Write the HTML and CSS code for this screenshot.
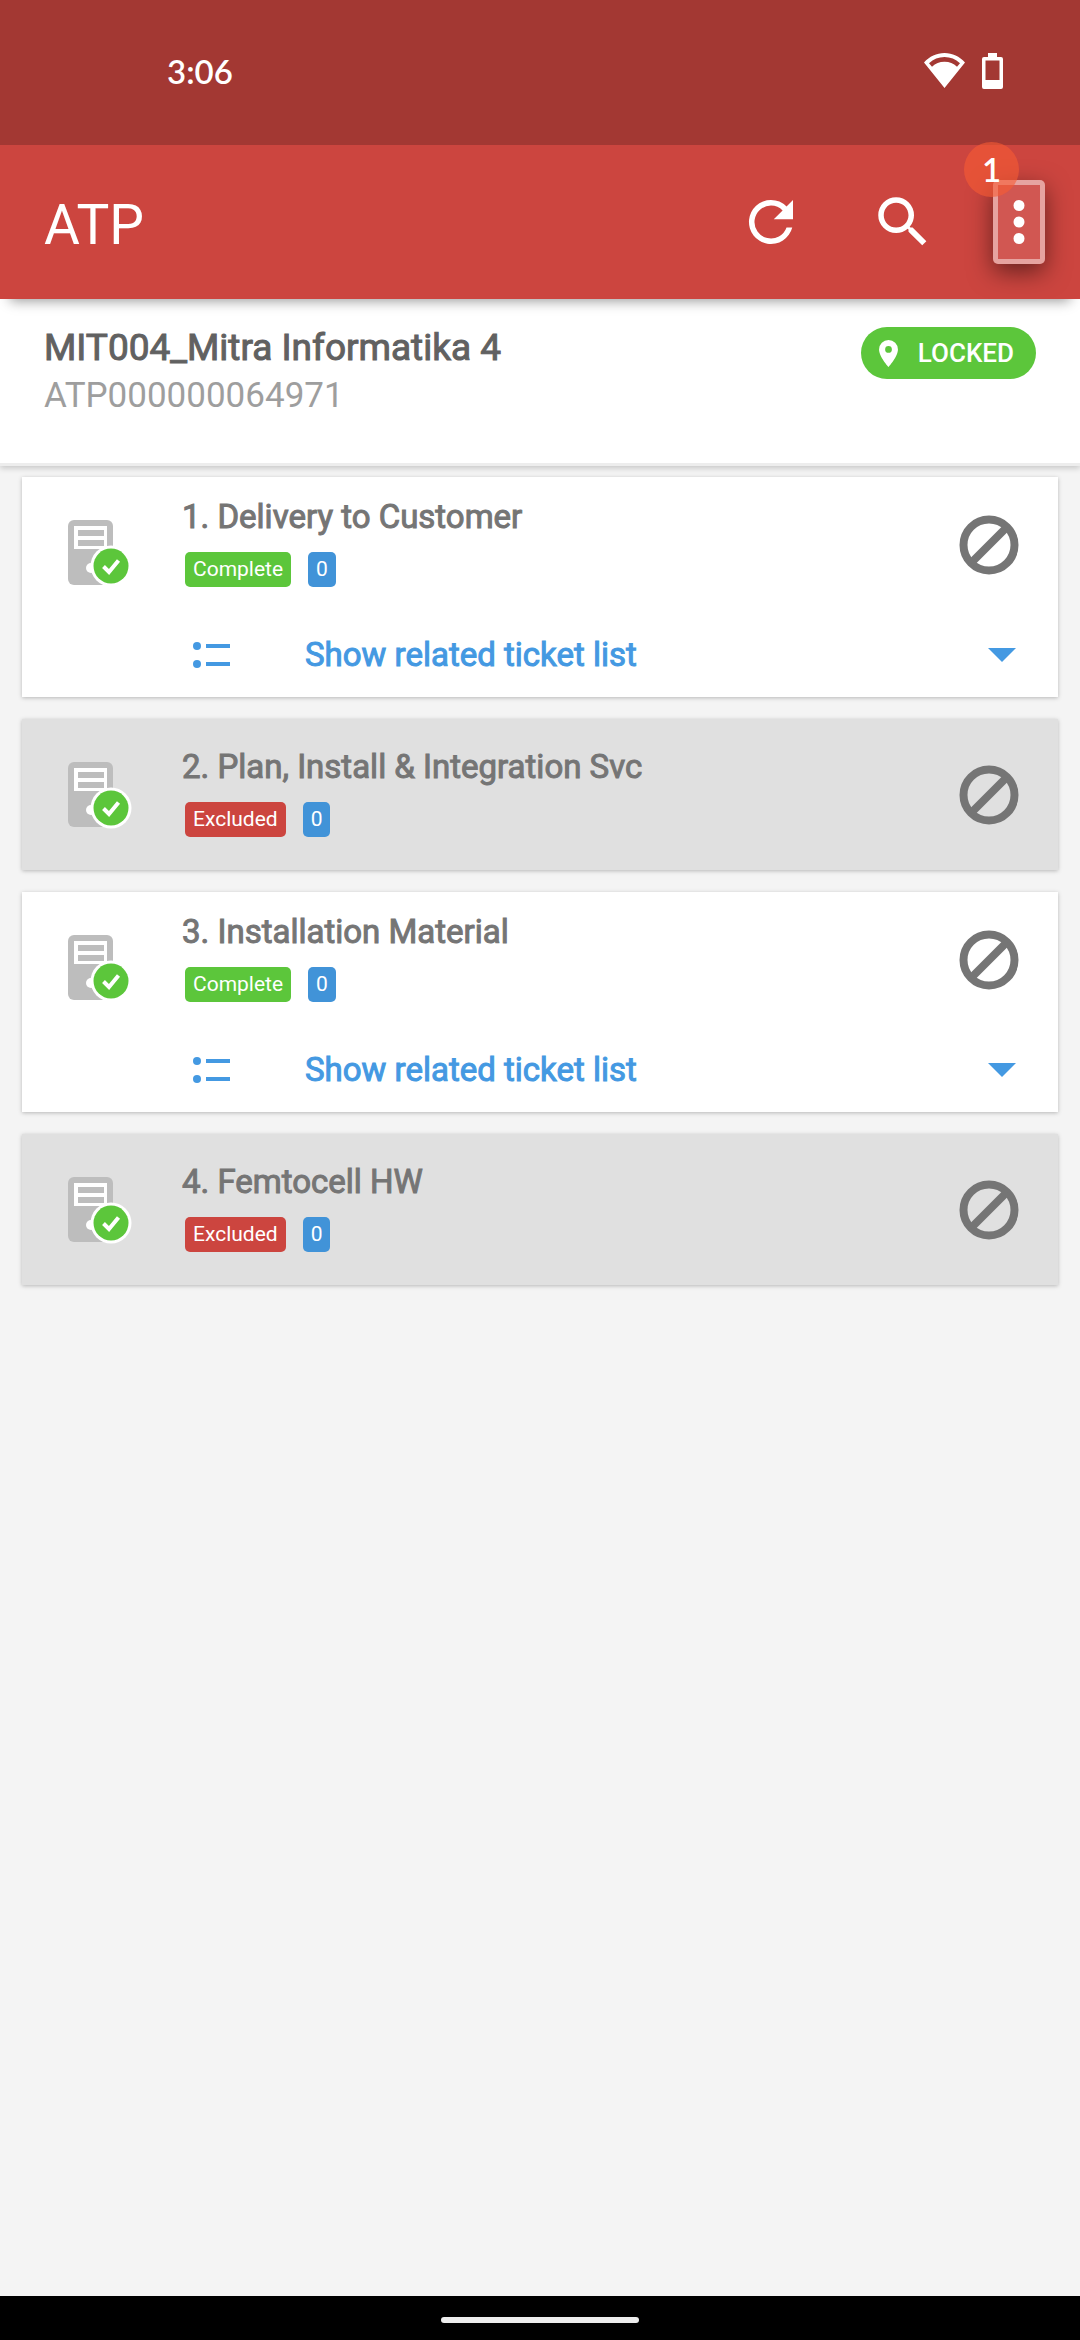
FILE: index.html
```html
<!DOCTYPE html>
<html lang="en">
<head>
    <meta charset="UTF-8">
    <meta name="viewport" content="width=device-width, initial-scale=1.0">
    <title>ATP</title>
    <link rel="stylesheet" href="styles.css">
</head>
<body>
    <!-- shared icons -->
    <svg class="sprite" aria-hidden="true">
        <symbol id="server" viewBox="0 0 66 70">
            <rect x="0" y="0" width="45" height="65" rx="6" fill="#bdbdbd"/>
            <path class="slot" d="M6 6h33v23H6z"/>
            <path d="M10 10h26v6H10zM10 20h26v6H10z" fill="#bdbdbd"/>
            <circle class="slot" cx="23" cy="48" r="5"/>
            <circle cx="43" cy="46" r="20.5" fill="#fff"/>
            <circle cx="43" cy="46" r="17.5" fill="#5cc63b"/>
            <path d="M35.5 46.500l5.500 5.500 9.500-11.500" fill="none" stroke="#fff" stroke-width="4"/>
        </symbol>
        <symbol id="block" viewBox="0 0 60 60">
            <g fill="none" stroke="#757575" stroke-width="8">
                <circle cx="30" cy="30" r="25.5"/>
                <path d="M12 48L48 12"/>
            </g>
        </symbol>
        <symbol id="list" viewBox="0 0 38 28">
            <circle cx="4" cy="5" r="4"/>
            <circle cx="4" cy="23" r="4"/>
            <path d="M13 3h24v4H13zM13 21h24v4H13z"/>
        </symbol>
        <symbol id="caret" viewBox="0 0 28 14">
            <path d="M0 0h28L14 14z"/>
        </symbol>
    </svg>

    <div class="statusbar">
        <span class="clock">3:06</span>
        <div class="status-icons">
            <svg width="41" height="35" viewBox="0 0 41 35">
                <path fill="#fff" fill-rule="evenodd" d="M20.500 0C12.500 0 5.500 3.500 0 9.500L20.500 35 41 9.500C35.500 3.500 28.500 0 20.500 0zM20.500 4C26.500 4 31.500 6.200 36 10.200L33 13.700C29.500 10.300 25.500 8.700 20.500 8.700S11.500 10.300 8 13.700L5 10.200C9.500 6.200 14.500 4 20.500 4z"/>
            </svg>
            <svg width="21" height="36" viewBox="0 0 21 36">
                <path fill="#fff" fill-rule="evenodd" d="M6 0h9v4h4a2 2 0 0 1 2 2v28a2 2 0 0 1-2 2H2a2 2 0 0 1-2-2V6a2 2 0 0 1 2-2h4zM3.500 7.500v19.500h14V7.500z"/>
            </svg>
        </div>
    </div>

    <header class="appbar">
        <h1>ATP</h1>
        <div class="actions">
            <button aria-label="Refresh">
                <svg viewBox="0 0 24 24"><path d="M17.650 6.350A7.958 7.958 0 0 0 12 4a8 8 0 1 0 7.730 10h-2.080A6 6 0 1 1 12 6c1.660 0 3.140.69 4.220 1.780L13 11h7V4z"/></svg>
            </button>
            <button aria-label="Search">
                <svg viewBox="0 0 24 24"><path d="M15.500 14h-.79l-.28-.27A6.471 6.471 0 0 0 16 9.500 6.500 6.500 0 1 0 9.500 16c1.610 0 3.090-.59 4.230-1.570l.27.28v.79l5 4.990L20.490 19zm-6 0C7.010 14 5 11.990 5 9.500S7.010 5 9.500 5 14 7.010 14 9.500 11.990 14 9.500 14z"/></svg>
            </button>
            <button class="more" aria-label="More options">
                <svg viewBox="0 0 24 24"><path d="M12 8a2 2 0 1 0 0-4 2 2 0 0 0 0 4zm0 2a2 2 0 1 0 0 4 2 2 0 0 0 0-4zm0 6a2 2 0 1 0 0 4 2 2 0 0 0 0-4z"/></svg>
                <span class="badge">1</span>
            </button>
        </div>
    </header>

    <section class="summary">
        <div>
            <h2>MIT004_Mitra Informatika 4</h2>
            <p>ATP000000064971</p>
        </div>
        <span class="locked">
            <svg width="19" height="27" viewBox="0 0 14 20"><path fill="#fff" fill-rule="evenodd" d="M7 0a7 7 0 0 0-7 7c0 5.250 7 13 7 13s7-7.750 7-13a7 7 0 0 0-7-7zm0 4.500a2.500 2.500 0 1 1 0 5 2.500 2.500 0 0 1 0-5z"/></svg>
            LOCKED
        </span>
    </section>

    <main class="cards">
        <article class="card expandable">
            <div class="card-main">
                <svg class="server"><use href="#server"/></svg>
                <div class="card-body">
                    <h3>1. Delivery to Customer</h3>
                    <div class="tags"><span class="tag green">Complete</span><span class="tag blue">0</span></div>
                </div>
                <button class="block" aria-label="Block"><svg><use href="#block"/></svg></button>
            </div>
            <button class="toggle">
                <svg class="list"><use href="#list"/></svg>
                <span>Show related ticket list</span>
                <svg class="caret"><use href="#caret"/></svg>
            </button>
        </article>

        <article class="card excluded">
            <div class="card-main">
                <svg class="server"><use href="#server"/></svg>
                <div class="card-body">
                    <h3>2. Plan, Install &amp; Integration Svc</h3>
                    <div class="tags"><span class="tag red">Excluded</span><span class="tag blue">0</span></div>
                </div>
                <button class="block" aria-label="Block"><svg><use href="#block"/></svg></button>
            </div>
        </article>

        <article class="card expandable">
            <div class="card-main">
                <svg class="server"><use href="#server"/></svg>
                <div class="card-body">
                    <h3>3. Installation Material</h3>
                    <div class="tags"><span class="tag green">Complete</span><span class="tag blue">0</span></div>
                </div>
                <button class="block" aria-label="Block"><svg><use href="#block"/></svg></button>
            </div>
            <button class="toggle">
                <svg class="list"><use href="#list"/></svg>
                <span>Show related ticket list</span>
                <svg class="caret"><use href="#caret"/></svg>
            </button>
        </article>

        <article class="card excluded">
            <div class="card-main">
                <svg class="server"><use href="#server"/></svg>
                <div class="card-body">
                    <h3>4. Femtocell HW</h3>
                    <div class="tags"><span class="tag red">Excluded</span><span class="tag blue">0</span></div>
                </div>
                <button class="block" aria-label="Block"><svg><use href="#block"/></svg></button>
            </div>
        </article>
    </main>

    <div class="navbar"><span class="pill"></span></div>
</body>
</html>
```

FILE: styles.css
```css
/* --- RESET & BASE --- */
* { box-sizing: border-box; margin: 0; padding: 0; }
body {
    min-height: 100vh;
    display: flex;
    flex-direction: column;
    font-family: Roboto, sans-serif;
    background: #f4f4f4;
}
button { border: none; background: none; font: inherit; color: inherit; cursor: pointer; }
svg { display: block; flex: none; }
.sprite { position: absolute; width: 0; height: 0; }

/* --- STATUS BAR --- */
.statusbar {
    height: 145px;
    padding: 0 77px 4px 167px;
    display: flex;
    align-items: center;
    justify-content: space-between;
    background: #a33833;
    color: #fff;
}
.clock { font-family: Lato, sans-serif; font-size: 33px; font-weight: 600; }
.status-icons { display: flex; gap: 17px; }

/* --- APP BAR --- */
.appbar {
    position: relative;
    z-index: 2;
    height: 154px;
    padding: 0 28px 0 44px;
    display: flex;
    align-items: center;
    justify-content: space-between;
    background: #cc453f;
    color: #fff;
    box-shadow: 0 12px 12px -10px rgba(0,0,0,.4);
}
.appbar h1 { font-size: 55px; font-weight: 400; line-height: 64px; padding-top: 6px; }
.actions { display: flex; align-items: center; gap: 66px; }
.actions button { width: 66px; height: 66px; }
.actions svg { width: 66px; height: 66px; fill: #fff; }
.actions .more {
    position: relative;
    width: 52px;
    height: 84px;
    margin: 0 7px 0 -9px;
    display: flex;
    align-items: center;
    justify-content: center;
    border: 5px solid rgba(255,255,255,.45);
    border-radius: 5px;
    background: rgba(255,255,255,.1);
    box-shadow: 0 8px 24px rgba(0,0,0,.5);
}
.badge {
    position: absolute;
    top: -43px;
    left: -34px;
    width: 55px;
    height: 55px;
    border-radius: 50%;
    background: rgba(246,91,51,.6);
    font: 600 33px/55px Lato, sans-serif;
    text-align: center;
}

/* --- SUMMARY --- */
.summary {
    position: relative;
    z-index: 1;
    min-height: 167px;
    padding: 28px 44px 0;
    display: flex;
    align-items: flex-start;
    justify-content: space-between;
    background: #fff;
    border-bottom: 3px solid #ededed;
    box-shadow: 0 2px 6px rgba(0,0,0,.2);
}
.summary h2 { font-size: 37px; line-height: 42px; font-weight: 400; color: #616161; -webkit-text-stroke: 1px; }
.summary p { font-size: 35px; line-height: 54px; color: #9e9e9e; }
.locked {
    height: 52px;
    padding: 0 22px 0 18px;
    display: flex;
    align-items: center;
    gap: 20px;
    border-radius: 26px;
    background: #5cc63b;
    color: #fff;
    font-size: 26px;
    font-weight: 500;
}

/* --- CARDS --- */
.cards { flex: 1; padding: 11px 22px 22px; display: flex; flex-direction: column; gap: 22px; }
.card { background: #fff; box-shadow: 0 1px 4px rgba(0,0,0,.25); }
.card.excluded { background: #e0e0e0; }
.card-main { min-height: 151px; padding: 0 39px 0 46px; display: flex; align-items: center; }
.server { width: 66px; height: 70px; margin-top: 5px; }
.slot { fill: #fff; }
.excluded .slot { fill: #e0e0e0; }
.card-body { flex: 1; margin-left: 48px; padding-bottom: 8px; }
.card h3 { font-size: 33px; line-height: 44px; font-weight: 400; color: #757575; -webkit-text-stroke: 1px; }
.tags { display: flex; gap: 17px; margin: 13px 0 0 3px; }
.tag { padding: 0 8px; border-radius: 5px; color: #fff; font-size: 21px; line-height: 35px; }
.green { background: #5cc63b; }
.red { background: #cc453f; }
.blue { background: #4193d8; }
.block svg { width: 60px; height: 60px; }

.expandable .card-main { min-height: 135px; }
.expandable .server { margin-top: 21px; }
.toggle {
    width: 100%;
    min-height: 85px;
    padding: 0 42px 0 171px;
    display: flex;
    align-items: center;
    color: #4499e2;
    font-size: 33px;
    text-align: left;
    -webkit-text-stroke: 1px;
}
.toggle span { flex: 1; margin-left: 74px; }
.toggle svg { fill: currentColor; }
.list { width: 38px; height: 28px; }
.caret { width: 28px; height: 14px; }

/* --- NAVIGATION BAR --- */
.navbar { height: 44px; padding-top: 4px; display: flex; align-items: center; justify-content: center; background: #000; }
.pill { width: 198px; height: 6px; border-radius: 3px; background: #ededed; }
```
